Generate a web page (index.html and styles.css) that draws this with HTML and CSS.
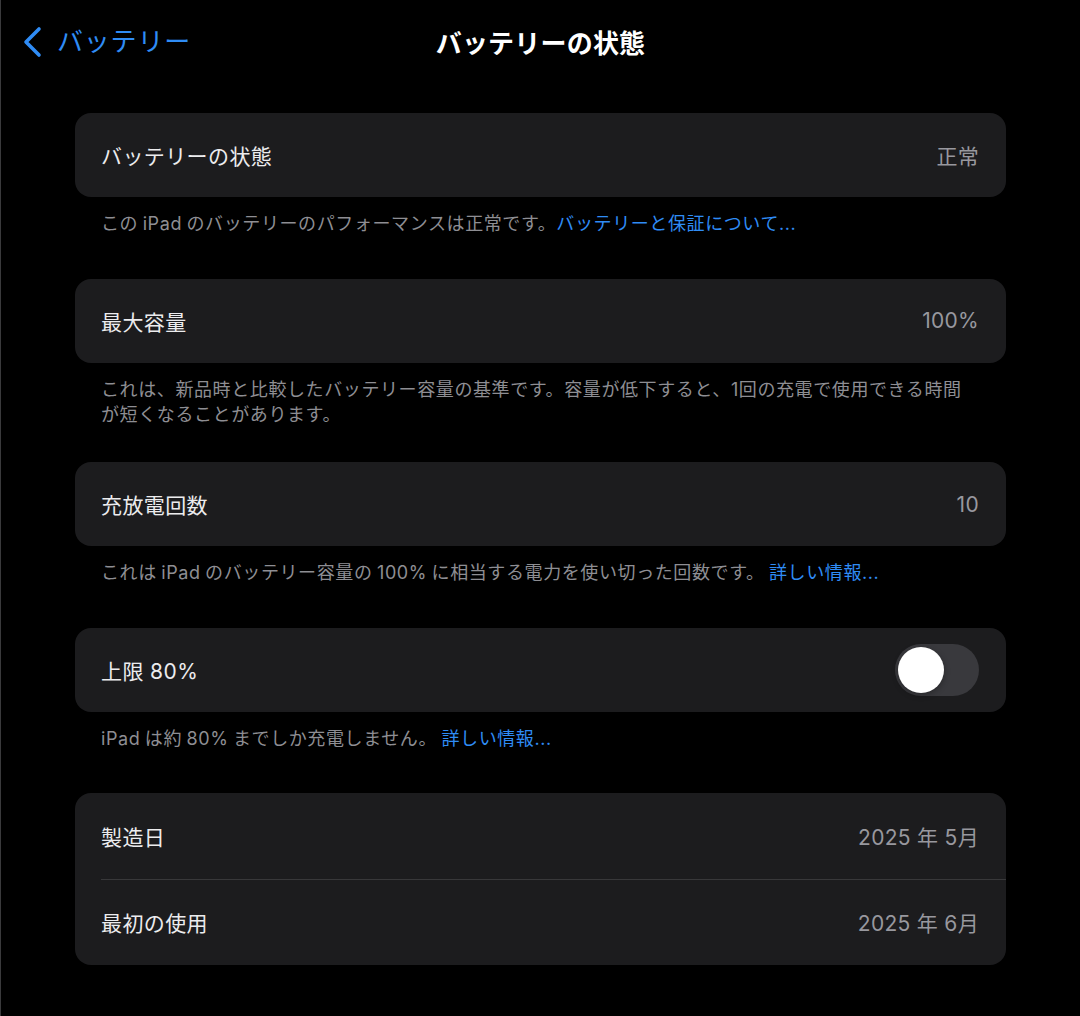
FILE: index.html
```html
<!DOCTYPE html>
<html lang="ja">
<head>
<meta charset="UTF-8" />
<meta name="viewport" content="width=device-width, initial-scale=1.0"/>
<title>バッテリーの状態</title>
<link rel="stylesheet" href="styles.css">
</head>
<body>

<header class="navbar">
  <a class="back" href="#">
    <svg class="chevron" width="22" height="32" viewBox="0 0 22 32">
      <path d="M18 3 L5 16 L18 29" fill="none" stroke="#2f8cf5" stroke-width="3.6" stroke-linecap="round" stroke-linejoin="round"/>
    </svg>
    <span>バッテリー</span>
  </a>
  <h1>バッテリーの状態</h1>
</header>

<main class="container">
  <section class="group">
    <div class="card">
      <div class="row">
        <span class="label">バッテリーの状態</span>
        <span class="value">正常</span>
      </div>
    </div>
    <p class="note">この iPad のバッテリーのパフォーマンスは正常です。<a href="#">バッテリーと保証について...</a></p>
  </section>

  <section class="group compact">
    <div class="card">
      <div class="row">
        <span class="label">最大容量</span>
        <span class="value">100%</span>
      </div>
    </div>
    <p class="note">これは、新品時と比較したバッテリー容量の基準です。容量が低下すると、1回の充電で使用できる時間が短くなることがあります。</p>
  </section>

  <section class="group">
    <div class="card">
      <div class="row">
        <span class="label">充放電回数</span>
        <span class="value">10</span>
      </div>
    </div>
    <p class="note">これは iPad のバッテリー容量の 100% に相当する電力を使い切った回数です。 <a href="#">詳しい情報...</a></p>
  </section>

  <section class="group">
    <div class="card">
      <div class="row">
        <span class="label">上限 80%</span>
        <span class="toggle"><span class="knob"></span></span>
      </div>
    </div>
    <p class="note">iPad は約 80% までしか充電しません。 <a href="#">詳しい情報...</a></p>
  </section>

  <section class="group">
    <div class="card list">
      <div class="row">
        <span class="label">製造日</span>
        <span class="value">2025 年 5月</span>
      </div>
      <div class="row">
        <span class="label">最初の使用</span>
        <span class="value">2025 年 6月</span>
      </div>
    </div>
  </section>
</main>

</body>
</html>
```

FILE: styles.css
```css
body {
  font-family: Inter, "Noto Sans CJK JP", "Noto Sans", sans-serif;
  background: #000;
  color: #e8e8ea;
  margin: 0;
  padding: 0;
  border-left: 1px solid #3a3a3c;
  min-height: 1016px;
  box-sizing: border-box;
}

.navbar {
  position: relative;
  height: 83px;
  display: flex;
  align-items: center;
  justify-content: center;
}

.navbar h1 {
  margin: 0;
  font-size: 26px;
  font-weight: 700;
  color: #fff;
  letter-spacing: 0.2px;
}

.back {
  position: absolute;
  left: 20px;
  top: 24px;
  display: flex;
  align-items: center;
  gap: 14px;
  color: #2f8cf5;
  text-decoration: none;
  font-size: 26px;
  line-height: 36px;
}

.back span {
  letter-spacing: 0.8px;
}

.container {
  padding: 30px 74px 0 74px;
}

.group {
  margin-bottom: 42.5px;
}

.group.compact {
  margin-bottom: 35.5px;
}

.card {
  background: #1c1c1e;
  border-radius: 16px;
  overflow: hidden;
}

.row {
  height: 84px;
  display: flex;
  align-items: center;
  justify-content: space-between;
  padding: 0 27px 0 26px;
  position: relative;
}

.list .row {
  height: 86px;
}

.row + .row::before {
  content: "";
  position: absolute;
  top: 0;
  left: 26px;
  right: 0;
  height: 1px;
  background: #38383a;
}

.label {
  font-size: 21px;
  letter-spacing: 0.4px;
  color: #ececee;
}

.value {
  font-size: 21px;
  letter-spacing: 0.3px;
  color: #98989e;
}

.toggle {
  width: 84px;
  height: 52px;
  border-radius: 26px;
  background: #39393d;
  position: relative;
}

.knob {
  position: absolute;
  left: 3px;
  top: 3px;
  width: 46px;
  height: 46px;
  border-radius: 50%;
  background: #fff;
  box-shadow: 0 2px 6px rgba(0,0,0,0.3);
}

.note {
  margin: 0;
  padding: 14px 27px 0 26px;
  font-size: 18px;
  line-height: 25px;
  letter-spacing: 0.6px;
  word-spacing: -1.2px;
  color: #8e8e93;
}

.note a {
  color: #2f8cf5;
  text-decoration: none;
}
```
